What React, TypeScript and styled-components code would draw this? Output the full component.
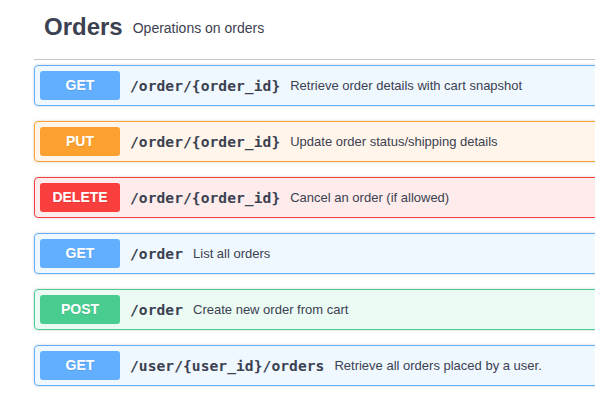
import React from "react";
import styled, { createGlobalStyle } from "styled-components";

const Global = createGlobalStyle`
  html, body { margin: 0; padding: 0; background: #fff; overflow: hidden; }
  body { font-family: "Liberation Sans", Arial, sans-serif; color: #3b4151; }
`;

type Method = "get" | "put" | "delete" | "post";

const palette: Record<Method, { main: string; bg: string }> = {
  get: { main: "#61affe", bg: "rgba(97,175,254,.1)" },
  put: { main: "#fca130", bg: "rgba(252,161,48,.1)" },
  delete: { main: "#f93e3e", bg: "rgba(249,62,62,.1)" },
  post: { main: "#49cc90", bg: "rgba(73,204,144,.1)" },
};

const Section = styled.section`
  width: 900px;
  margin-left: 34px;
`;

const TagHeader = styled.h3`
  display: flex;
  align-items: center;
  margin: 0 0 5px;
  padding: 13px 20px 18px 10px;
  border-bottom: 1px solid rgba(59, 65, 81, 0.3);
  font-family: "Liberation Sans", Arial, sans-serif;
`;

const TagTitle = styled.span`
  font-size: 24px;
  line-height: 28px;
  font-weight: 700;
  color: #3b4151;
`;

const TagDesc = styled.small`
  font-size: 14px;
  font-weight: 400;
  color: #3b4151;
  padding: 0 10px;
  margin-top: 1px;
`;

const Block = styled.div<{ $m: Method }>`
  margin: 0 0 15px;
  border: 1px solid ${(p) => palette[p.$m].main};
  border-radius: 4px;
  background: ${(p) => palette[p.$m].bg};
  box-shadow: 0 0 3px rgba(0, 0, 0, 0.19);
`;

const Summary = styled.div`
  display: flex;
  align-items: center;
  padding: 5px;
`;

const Badge = styled.span<{ $m: Method }>`
  min-width: 80px;
  padding: 6px 0;
  border-radius: 3px;
  background: ${(p) => palette[p.$m].main};
  color: #fff;
  font-family: "Liberation Sans", Arial, sans-serif;
  font-size: 14px;
  line-height: 17px;
  font-weight: 700;
  text-align: center;
  text-shadow: 0 1px 0 rgba(0, 0, 0, 0.1);
`;

const Path = styled.span`
  padding: 0 10px;
  font-family: "DejaVu Sans Mono", "Liberation Mono", monospace;
  font-size: 14.6px;
  font-weight: 700;
  color: #3b4151;
  letter-spacing: 0.05px;
`;

const Desc = styled.span`
  font-size: 13px;
  color: #3b4151;
`;

const ops: { m: Method; path: string; desc: string }[] = [
  { m: "get", path: "/order/{order_id}", desc: "Retrieve order details with cart snapshot" },
  { m: "put", path: "/order/{order_id}", desc: "Update order status/shipping details" },
  { m: "delete", path: "/order/{order_id}", desc: "Cancel an order (if allowed)" },
  { m: "get", path: "/order", desc: "List all orders" },
  { m: "post", path: "/order", desc: "Create new order from cart" },
  { m: "get", path: "/user/{user_id}/orders", desc: "Retrieve all orders placed by a user." },
];

export default function App() {
  return (
    <>
      <Global />
      <Section>
        <TagHeader>
          <TagTitle>Orders</TagTitle>
          <TagDesc>Operations on orders</TagDesc>
        </TagHeader>
        {ops.map((o, i) => (
          <Block key={i} $m={o.m}>
            <Summary>
              <Badge $m={o.m}>{o.m.toUpperCase()}</Badge>
              <Path>{o.path}</Path>
              <Desc>{o.desc}</Desc>
            </Summary>
          </Block>
        ))}
      </Section>
    </>
  );
}
